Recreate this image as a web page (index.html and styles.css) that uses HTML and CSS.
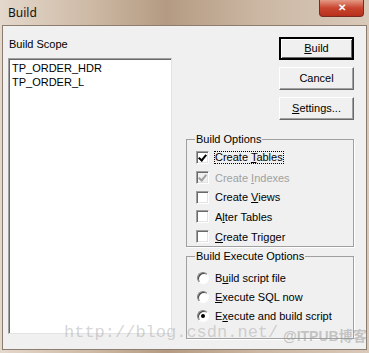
FILE: index.html
```html
<!DOCTYPE html>
<html lang="en">
<head>
    <meta charset="UTF-8">
    <title>Build</title>
    <link rel="stylesheet" href="styles.css">
</head>
<body>
    <div class="window">
        <div class="titlebar">
            <span class="title">Build</span>
            <span class="close">&#x2715;</span>
        </div>

        <div class="client">
            <div class="scope">
                <div class="scope-label">Build Scope</div>
                <div class="listbox">
                    <div>TP_ORDER_HDR</div>
                    <div>TP_ORDER_L</div>
                </div>
            </div>

            <div class="side">
                <div class="btn default"><u>B</u>uild</div>
                <div class="btn">Cancel</div>
                <div class="btn"><u>S</u>ettings...</div>

                <fieldset class="group options">
                    <legend>Build Options</legend>
                    <div class="row"><span class="check on"></span><span class="focus">Create <u>T</u>ables</span></div>
                    <div class="row disabled"><span class="check on"></span><span>Create <u>I</u>ndexes</span></div>
                    <div class="row"><span class="check"></span><span>Create <u>V</u>iews</span></div>
                    <div class="row"><span class="check"></span><span>A<u>l</u>ter Tables</span></div>
                    <div class="row"><span class="check"></span><span><u>C</u>reate Trigger</span></div>
                </fieldset>

                <fieldset class="group execute">
                    <legend>Build Execute Options</legend>
                    <div class="row"><span class="radio"></span><span>B<u>u</u>ild script file</span></div>
                    <div class="row"><span class="radio"></span><span><u>E</u>xecute SQL now</span></div>
                    <div class="row"><span class="radio on"></span><span>E<u>x</u>ecute and build script</span></div>
                </fieldset>
            </div>
        </div>

        <div class="watermark">http://blog.csdn.net/</div>
        <div class="stamp">@ITPUB博客</div>
    </div>
</body>
</html>
```

FILE: styles.css
```css
body {
    margin: 0;
    font-family: "Liberation Sans", Arial, sans-serif;
    font-size: 11px;
    color: #000;
}

.window {
    position: relative;
    width: 369px;
    height: 353px;
    box-sizing: border-box;
    padding: 0 2px 3px 2px;
    display: flex;
    flex-direction: column;
    background: linear-gradient(90deg, #e4d8cc 0%, #cdb9a4 25%, #b49a82 45%, #cbb7a3 70%, #d9c9b9 100%);
    overflow: hidden;
}

.titlebar {
    height: 25px;
    flex: none;
    display: flex;
    justify-content: space-between;
    align-items: flex-start;
}

.title {
    font-family: "Noto Sans", sans-serif;
    font-size: 12px;
    margin: 4px 0 0 6px;
    color: #111;
}

.close {
    width: 45px;
    height: 17px;
    margin-right: 3px;
    border: 1px solid #7a2a20;
    border-top: none;
    border-radius: 0 0 4px 4px;
    background: linear-gradient(#e59a86, #c8452f 50%, #b8301c);
    color: #fff;
    font-size: 10px;
    font-weight: bold;
    text-align: center;
    line-height: 16px;
    box-sizing: border-box;
}

.client {
    flex: 1;
    display: flex;
    background: #f0f0f0;
    border: 1px solid #8c7d70;
}

.scope {
    width: 164px;
    margin-left: 5px;
}

.scope-label {
    margin-top: 12px;
    height: 20px;
    padding-left: 1px;
}

.listbox {
    height: 276px;
    box-sizing: border-box;
    background: #fff;
    border: 1px solid;
    border-color: #a0a0a0 #e3e3e3 #e3e3e3 #a0a0a0;
    box-shadow: inset 1px 1px 0 #696969;
    padding: 2px 3px;
    line-height: 14px;
}

.side {
    width: 168px;
    margin-left: 14px;
    padding-top: 11px;
    display: flex;
    flex-direction: column;
}

.btn {
    align-self: flex-end;
    flex: none;
    width: 75px;
    height: 23px;
    box-sizing: border-box;
    margin-bottom: 7px;
    background: #f0f0f0;
    border: 1px solid;
    border-color: #fff #696969 #696969 #fff;
    box-shadow: inset -1px -1px 0 #a0a0a0;
    text-align: center;
    line-height: 21px;
}

.btn.default {
    border-width: 2px;
    border-color: #000;
    box-shadow: inset 1px 1px 0 #fff, inset -1px -1px 0 #696969;
    line-height: 19px;
}

.group {
    flex: none;
    box-sizing: border-box;
    margin: 0;
    padding: 0 0 0 9px;
    border: 1px solid #a0a0a0;
    box-shadow: 1px 1px 0 #fff;
}

.group legend {
    padding: 0 1px;
    margin-left: -1px;
    line-height: 12px;
}

.options {
    margin-top: 6px;
    height: 114px;
    padding-top: 3px;
}

.options .row {
    height: 19.7px;
}

.execute {
    margin-top: 3px;
    height: 89px;
    padding-top: 6px;
}

.execute .row {
    height: 19px;
}

.row {
    display: flex;
    align-items: center;
    gap: 5px;
}

.row span:last-child {
    padding: 0 1px;
}

.focus {
    outline: 1px dotted #000;
    outline-offset: -1px;
    line-height: 13px;
}

.disabled {
    color: #a0a0a0;
}

.check {
    width: 13px;
    height: 13px;
    box-sizing: border-box;
    background: #fff;
    border: 1px solid;
    border-color: #a0a0a0 #fff #fff #a0a0a0;
    box-shadow: inset 1px 1px 0 #696969, inset -1px -1px 0 #e3e3e3;
    position: relative;
}

.check.on::after {
    content: "";
    position: absolute;
    left: 3px;
    top: 1px;
    width: 3px;
    height: 6px;
    border: solid #000;
    border-width: 0 2px 2px 0;
    transform: rotate(40deg);
}

.disabled .check {
    background: #f0f0f0;
}

.disabled .check.on::after {
    border-color: #a0a0a0;
}

.radio {
    width: 12px;
    height: 12px;
    box-sizing: border-box;
    border-radius: 50%;
    background: #fff;
    border: 1px solid;
    border-color: #808080 #fff #fff #808080;
    box-shadow: inset 1px 1px 0 #404040;
    position: relative;
    margin-left: 1px;
}

.radio.on::after {
    content: "";
    position: absolute;
    left: 3px;
    top: 3px;
    width: 4px;
    height: 4px;
    border-radius: 50%;
    background: #000;
}

u {
    text-decoration-thickness: 1px;
    text-underline-offset: 1px;
}

.watermark {
    position: absolute;
    left: 64px;
    top: 323px;
    font-family: "Liberation Mono", monospace;
    font-size: 17px;
    color: rgba(150, 150, 150, 0.4);
    pointer-events: none;
    white-space: nowrap;
}

.stamp {
    position: absolute;
    left: 283px;
    top: 325px;
    font-family: "Liberation Sans", "Noto Sans CJK SC", sans-serif;
    font-size: 14px;
    font-weight: bold;
    color: rgba(150, 150, 150, 0.5);
    pointer-events: none;
}
```
